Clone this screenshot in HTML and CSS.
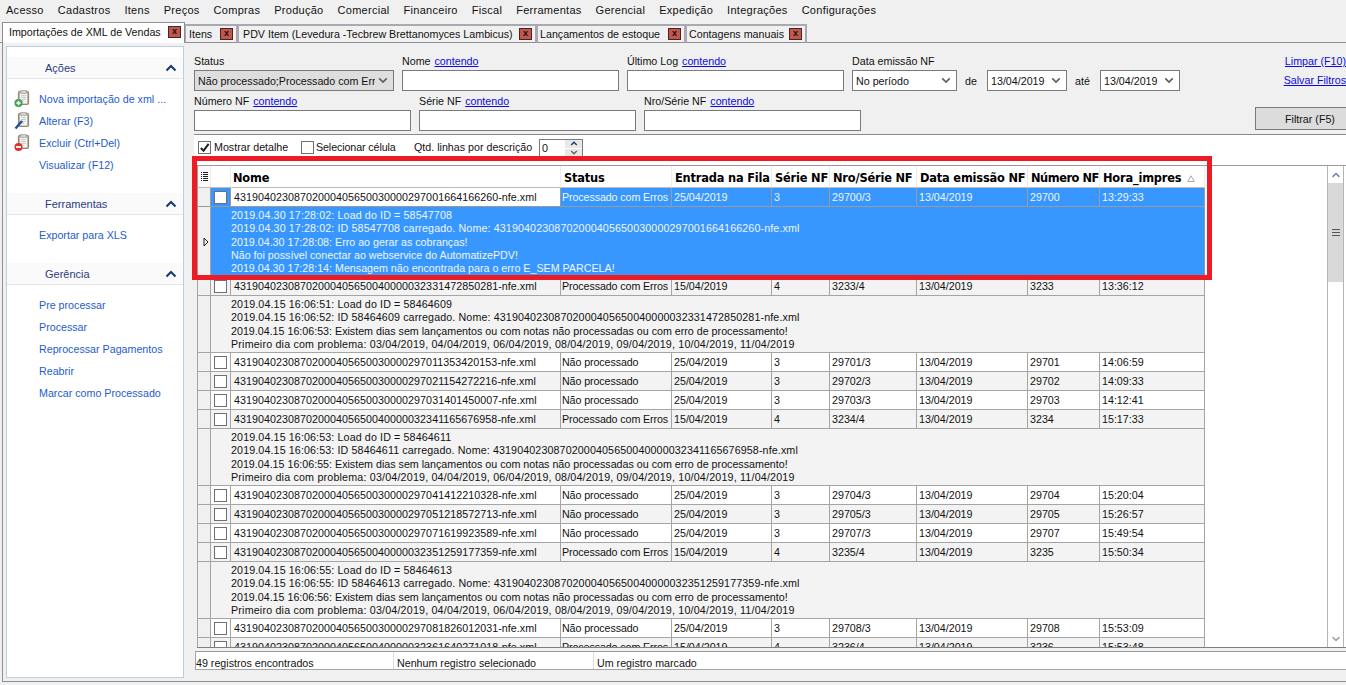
FILE: index.html
```html
<!DOCTYPE html>
<html lang="pt-BR">
<head>
<meta charset="utf-8">
<title>Importações de XML de Vendas</title>
<link rel="stylesheet" href="styles.css">
</head>
<body>
<svg class="defs" width="0" height="0" aria-hidden="true">
  <symbol id="board" viewBox="0 0 14 16">
    <rect x="1.5" y="1.5" width="11" height="14" rx="1" fill="#b3a28c" stroke="#8c7d6b"/>
    <rect x="3" y="3" width="8" height="11.5" fill="#f4f4f2"/>
    <rect x="4" y="0.5" width="6" height="3" fill="#d2d2d2" stroke="#9a9a9a" stroke-width=".7"/>
    <path d="M4.5 6h5M4.5 8h5M4.5 10h5M4.5 12h3" stroke="#b4bac0" stroke-width=".8"/>
  </symbol>
  <symbol id="chev" viewBox="0 0 12 8">
    <path d="M1.5 6.5 6 2l4.5 4.5" fill="none" stroke="#17366f" stroke-width="2"/>
  </symbol>
  <symbol id="down" viewBox="0 0 12 8">
    <path d="M1.5 1.5 6 6l4.5-4.5" fill="none" stroke="#5f5f5f" stroke-width="2"/>
  </symbol>
</svg>

<nav class="menubar">
  <span>Acesso</span><span>Cadastros</span><span>Itens</span><span>Preços</span><span>Compras</span><span>Produção</span><span>Comercial</span><span>Financeiro</span><span>Fiscal</span><span>Ferramentas</span><span>Gerencial</span><span>Expedição</span><span>Integrações</span><span>Configurações</span>
</nav>

<div class="tabs">
  <div class="tab active w-import"><span class="tab-label">Importações de XML de Vendas</span><b class="close">x</b></div>
  <div class="tab w-itens"><span class="tab-label">Itens</span><b class="close">x</b></div>
  <div class="tab w-pdv"><span class="tab-label">PDV Item (Levedura -Tecbrew Brettanomyces Lambicus)</span><b class="close">x</b></div>
  <div class="tab w-lanc"><span class="tab-label">Lançamentos de estoque</span><b class="close">x</b></div>
  <div class="tab w-cont"><span class="tab-label">Contagens manuais</span><b class="close">x</b></div>
</div>

<div class="page">
  <aside class="side">
    <div class="sec-head"><span>Ações</span><svg class="chev"><use href="#chev"/></svg></div>
    <ul class="sec-list first">
      <li><svg class="ico" viewBox="0 0 16 18"><use href="#board" x="3" y="0" width="13" height="15"/><circle cx="4.5" cy="13" r="4" fill="#3f9e54"/><path d="M2.3 13h4.4M4.5 10.8v4.4" stroke="#fff" stroke-width="1.5"/></svg>Nova importação de xml ...</li>
      <li><svg class="ico" viewBox="0 0 16 18"><use href="#board" x="3" y="0" width="13" height="15"/><path d="M1.5 16.5 8 9" stroke="#1d4f9c" stroke-width="2.4"/></svg>Alterar (F3)</li>
      <li><svg class="ico" viewBox="0 0 16 18"><use href="#board" x="3" y="0" width="13" height="15"/><circle cx="4.5" cy="13" r="4" fill="#d6332b"/><path d="M2 13h5" stroke="#fff" stroke-width="1.8"/></svg>Excluir (Ctrl+Del)</li>
      <li><span class="ico"></span>Visualizar (F12)</li>
    </ul>
    <div class="sec-head"><span>Ferramentas</span><svg class="chev"><use href="#chev"/></svg></div>
    <ul class="sec-list">
      <li><span class="ico"></span>Exportar para XLS</li>
    </ul>
    <div class="sec-head"><span>Gerência</span><svg class="chev"><use href="#chev"/></svg></div>
    <ul class="sec-list">
      <li><span class="ico"></span>Pre processar</li>
      <li><span class="ico"></span>Processar</li>
      <li><span class="ico"></span>Reprocessar Pagamentos</li>
      <li><span class="ico"></span>Reabrir</li>
      <li><span class="ico"></span>Marcar como Processado</li>
    </ul>
  </aside>

  <main class="main">
    <section class="filters">
      <div class="frow">
        <div class="field w-status"><label>Status</label><div class="ctl select grey"><span class="clip">Não processado;Processado com Erros</span><svg class="dd"><use href="#down"/></svg></div></div>
        <div class="field w-text"><label>Nome <a>contendo</a></label><div class="ctl"></div></div>
        <div class="field w-text"><label>Último Log <a>contendo</a></label><div class="ctl"></div></div>
        <div class="field w-period"><label>Data emissão NF</label><div class="ctl select"><span class="clip">No período</span><svg class="dd"><use href="#down"/></svg></div></div>
        <span class="sep sep-de">de</span>
        <div class="ctl select date"><span class="clip">13/04/2019</span><svg class="dd"><use href="#down"/></svg></div>
        <span class="sep sep-ate">até</span>
        <div class="ctl select date"><span class="clip">13/04/2019</span><svg class="dd"><use href="#down"/></svg></div>
        <div class="flinks"><a>Limpar (F10)</a><a>Salvar Filtros</a></div>
      </div>
      <div class="frow second">
        <div class="field w-text"><label>Número NF <a>contendo</a></label><div class="ctl"></div></div>
        <div class="field w-text"><label>Série NF <a>contendo</a></label><div class="ctl"></div></div>
        <div class="field w-text"><label>Nro/Série NF <a>contendo</a></label><div class="ctl"></div></div>
        <button class="filter-btn">Filtrar (F5)</button>
      </div>
    </section>

    <section class="options">
      <span class="box checked"><svg viewBox="0 0 12 12"><path d="M2 6.5 5 9.5 10.5 2" fill="none" stroke="#222" stroke-width="2.2"/></svg></span><span class="opt-a">Mostrar detalhe</span>
      <span class="box"></span><span class="opt-b">Selecionar célula</span>
      <span class="opt-c">Qtd. linhas por descrição</span>
      <div class="spin"><span>0</span><div class="spin-btns"><i><svg><use href="#chev"/></svg></i><i><svg><use href="#down"/></svg></i></div></div>
    </section>

    <section class="grid">
      <div class="grid-view">
        <table>
          <colgroup><col class="c0"><col class="c1"><col class="c2"><col class="c3"><col class="c4"><col class="c5"><col class="c6"><col class="c7"><col class="c8"><col class="c9"></colgroup>
          <thead>
            <tr>
              <th class="rh"><svg class="listico" viewBox="0 0 7 9"><path d="M0 .5h1M0 2.5h1M0 4.5h1M0 6.5h1M0 8.5h1M2 .5h5M2 2.5h5M2 4.5h5M2 6.5h5M2 8.5h5" stroke="#222" stroke-width="1"/></svg></th>
              <th></th><th>Nome</th><th>Status</th><th>Entrada na Fila</th><th>Série NF</th><th>Nro/Série NF</th><th>Data emissão NF</th><th class="tight">Número NF</th>
              <th>Hora_impres<svg class="sort" viewBox="0 0 8 7"><path d="M4 .8 7.3 6.5H.7Z" fill="none" stroke="#aaa"/></svg></th>
            </tr>
          </thead>
          <tbody>
            <tr class="sel">
              <td class="rh"></td><td class="ck"><span class="box"></span></td><td class="focus">43190402308702000405650030000297001664166260-nfe.xml</td><td>Processado com Erros</td><td>25/04/2019</td><td>3</td><td>29700/3</td><td>13/04/2019</td><td>29700</td><td>13:29:33</td>
            </tr>
            <tr class="sel det d5">
              <td class="rh"><svg class="cur" viewBox="0 0 6 10"><path d="M1 1 5 5 1 9Z" fill="none" stroke="#222"/></svg></td>
              <td colspan="9"><p>2019.04.30 17:28:02: Load do ID = 58547708</p><p>2019.04.30 17:28:02: ID 58547708 carregado. Nome: 43190402308702000405650030000297001664166260-nfe.xml</p><p class="plain">2019.04.30 17:28:08: Erro ao gerar as cobranças!</p><p class="plain">Não foi possível conectar ao webservice do AutomatizePDV!</p><p class="plain">2019.04.30 17:28:14: Mensagem não encontrada para o erro E_SEM PARCELA!</p></td>
            </tr>
            <tr class="alt">
              <td class="rh"></td><td class="ck"><span class="box"></span></td><td>43190402308702000405650040000032331472850281-nfe.xml</td><td>Processado com Erros</td><td>15/04/2019</td><td>4</td><td>3233/4</td><td>13/04/2019</td><td>3233</td><td>13:36:12</td>
            </tr>
            <tr class="alt det d4">
              <td class="rh"></td>
              <td colspan="9"><p>2019.04.15 16:06:51: Load do ID = 58464609</p><p>2019.04.15 16:06:52: ID 58464609 carregado. Nome: 43190402308702000405650040000032331472850281-nfe.xml</p><p class="plain">2019.04.15 16:06:53: Existem dias sem lançamentos ou com notas não processadas ou com erro de processamento!</p><p class="dates">Primeiro dia com problema: 03/04/2019, 04/04/2019, 06/04/2019, 08/04/2019, 09/04/2019, 10/04/2019, 11/04/2019</p></td>
            </tr>
            <tr>
              <td class="rh"></td><td class="ck"><span class="box"></span></td><td>43190402308702000405650030000297011353420153-nfe.xml</td><td>Não processado</td><td>25/04/2019</td><td>3</td><td>29701/3</td><td>13/04/2019</td><td>29701</td><td>14:06:59</td>
            </tr>
            <tr class="alt">
              <td class="rh"></td><td class="ck"><span class="box"></span></td><td>43190402308702000405650030000297021154272216-nfe.xml</td><td>Não processado</td><td>25/04/2019</td><td>3</td><td>29702/3</td><td>13/04/2019</td><td>29702</td><td>14:09:33</td>
            </tr>
            <tr>
              <td class="rh"></td><td class="ck"><span class="box"></span></td><td>43190402308702000405650030000297031401450007-nfe.xml</td><td>Não processado</td><td>25/04/2019</td><td>3</td><td>29703/3</td><td>13/04/2019</td><td>29703</td><td>14:12:41</td>
            </tr>
            <tr class="alt">
              <td class="rh"></td><td class="ck"><span class="box"></span></td><td>43190402308702000405650040000032341165676958-nfe.xml</td><td>Processado com Erros</td><td>15/04/2019</td><td>4</td><td>3234/4</td><td>13/04/2019</td><td>3234</td><td>15:17:33</td>
            </tr>
            <tr class="alt det d4">
              <td class="rh"></td>
              <td colspan="9"><p>2019.04.15 16:06:53: Load do ID = 58464611</p><p>2019.04.15 16:06:53: ID 58464611 carregado. Nome: 43190402308702000405650040000032341165676958-nfe.xml</p><p class="plain">2019.04.15 16:06:55: Existem dias sem lançamentos ou com notas não processadas ou com erro de processamento!</p><p class="dates">Primeiro dia com problema: 03/04/2019, 04/04/2019, 06/04/2019, 08/04/2019, 09/04/2019, 10/04/2019, 11/04/2019</p></td>
            </tr>
            <tr>
              <td class="rh"></td><td class="ck"><span class="box"></span></td><td>43190402308702000405650030000297041412210328-nfe.xml</td><td>Não processado</td><td>25/04/2019</td><td>3</td><td>29704/3</td><td>13/04/2019</td><td>29704</td><td>15:20:04</td>
            </tr>
            <tr class="alt">
              <td class="rh"></td><td class="ck"><span class="box"></span></td><td>43190402308702000405650030000297051218572713-nfe.xml</td><td>Não processado</td><td>25/04/2019</td><td>3</td><td>29705/3</td><td>13/04/2019</td><td>29705</td><td>15:26:57</td>
            </tr>
            <tr>
              <td class="rh"></td><td class="ck"><span class="box"></span></td><td>43190402308702000405650030000297071619923589-nfe.xml</td><td>Não processado</td><td>25/04/2019</td><td>3</td><td>29707/3</td><td>13/04/2019</td><td>29707</td><td>15:49:54</td>
            </tr>
            <tr class="alt">
              <td class="rh"></td><td class="ck"><span class="box"></span></td><td>43190402308702000405650040000032351259177359-nfe.xml</td><td>Processado com Erros</td><td>15/04/2019</td><td>4</td><td>3235/4</td><td>13/04/2019</td><td>3235</td><td>15:50:34</td>
            </tr>
            <tr class="alt det d4">
              <td class="rh"></td>
              <td colspan="9"><p>2019.04.15 16:06:55: Load do ID = 58464613</p><p>2019.04.15 16:06:55: ID 58464613 carregado. Nome: 43190402308702000405650040000032351259177359-nfe.xml</p><p class="plain">2019.04.15 16:06:56: Existem dias sem lançamentos ou com notas não processadas ou com erro de processamento!</p><p class="dates">Primeiro dia com problema: 03/04/2019, 04/04/2019, 06/04/2019, 08/04/2019, 09/04/2019, 10/04/2019, 11/04/2019</p></td>
            </tr>
            <tr>
              <td class="rh"></td><td class="ck"><span class="box"></span></td><td>43190402308702000405650030000297081826012031-nfe.xml</td><td>Não processado</td><td>25/04/2019</td><td>3</td><td>29708/3</td><td>13/04/2019</td><td>29708</td><td>15:53:09</td>
            </tr>
            <tr class="alt">
              <td class="rh"></td><td class="ck"><span class="box"></span></td><td>43190402308702000405650040000032361640271018-nfe.xml</td><td>Processado com Erros</td><td>15/04/2019</td><td>4</td><td>3236/4</td><td>13/04/2019</td><td>3236</td><td>15:53:48</td>
            </tr>
          </tbody>
        </table>
      </div>
      <div class="vscroll">
        <div class="sb-btn"><svg><use href="#chev"/></svg></div>
        <div class="sb-thumb"><i></i></div>
        <div class="sb-track"></div>
        <div class="sb-btn"><svg><use href="#down"/></svg></div>
      </div>
    </section>

    <footer class="status">
      <span class="s1">49 registros encontrados</span>
      <span class="s2">Nenhum registro selecionado</span>
      <span class="s3">Um registro marcado</span>
    </footer>
  </main>
</div>

<div class="highlight"></div>
</body>
</html>
```

FILE: styles.css
```css
* { box-sizing: border-box; }
html, body { margin: 0; padding: 0; }
body {
  width: 1346px;
  height: 685px;
  overflow: hidden;
  position: relative;
  background: #f0f0f0;
  font-family: "Liberation Sans", Arial, sans-serif;
  font-size: 10.7px;
  color: #111;
}
.defs { position: absolute; }
a { color: #0a0ae0; text-decoration: underline; }

/* menu */
.menubar {
  height: 22px;
  display: flex;
  align-items: center;
  gap: 14px;
  padding: 0 0 3px 6px;
  font-size: 11px;
  letter-spacing: .28px;
}

/* tabs */
.tabs {
  height: 21px;
  display: flex;
  align-items: flex-end;
  padding-left: 2px;
  border-bottom: 1px solid #8f8f98;
}
.tab {
  height: 19px;
  margin-bottom: -1px;
  display: flex;
  align-items: center;
  justify-content: space-between;
  padding: 0 3px 0 3px;
  background: #f0f0f0;
  border: 2px solid #a9a9b2;
  border-bottom: 1px solid #8f8f98;
  border-left-width: 1px;
  font-size: 10.7px;
  white-space: nowrap;
}
.tab.active {
  height: 21px;
  background: #fff;
  border: 1px solid #8f8f98;
  border-bottom: 0;
  padding: 0 3px 2px 6px;
}
.w-import { width: 183px; }
.w-itens { width: 53px; }
.w-pdv { width: 299px; padding-left: 4px; }
.w-lanc { width: 149px; padding-left: 2px; }
.w-cont { width: 121px; padding-left: 2px; }
.close {
  width: 13px;
  height: 12px;
  flex: none;
  background: #c0564c;
  border: 1px solid #4a2320;
  color: #111;
  font: bold 9px/9px "Liberation Sans", Arial, sans-serif;
  letter-spacing: 0;
  text-align: center;
}

/* page */
.page {
  height: 639px;
  margin-left: 2px;
  display: flex;
  gap: 10px;
  padding: 3px 0 3px 3px;
  border-left: 1px solid #8f8f98;
  border-bottom: 1px solid #8f8f98;
}
.side {
  width: 178px;
  flex: none;
  background: #fff;
  border: 1px solid #bccfdd;
  padding-top: 10px;
}
.sec-head {
  height: 22px;
  display: flex;
  align-items: center;
  justify-content: space-between;
  padding: 0 6px 0 38px;
  background: #fafafa;
  border-bottom: 1px solid #e2e6e9;
  color: #2c3a86;
  font-size: 11px;
}
.chev { width: 12px; height: 8px; }
.sec-list { list-style: none; margin: 0; padding: 9px 0 17px 0; }
.sec-list li {
  height: 22px;
  display: flex;
  align-items: center;
  color: #1e5ccf;
  white-space: nowrap;
  padding-left: 7px;
}
.ico { width: 16px; height: 18px; margin-right: 9px; flex: none; }

/* main */
.main {
  flex: 1;
  min-width: 0;
  display: flex;
  flex-direction: column;
}
.filters {
  height: 89px;
  padding-top: 8px;
  border-bottom: 1px solid #8a8a8a;
  overflow: hidden;
}
.frow { display: flex; align-items: flex-end; gap: 8px; height: 37px; }
.frow.second { margin-top: 3px; }
.field { display: flex; flex-direction: column; }
.field label { height: 16px; line-height: 14px; white-space: nowrap; }
.field label a { margin-left: 1px; }
.w-status { width: 200px; }
.w-text { width: 217px; }
.w-period { width: 105px; }
.ctl {
  height: 21px;
  background: #fff;
  border: 1px solid #7a7a7a;
}
.select {
  display: flex;
  align-items: center;
  justify-content: space-between;
  padding: 0 3px;
  gap: 3px;
}
.select.grey { background: #dedede; }
.clip { overflow: hidden; white-space: nowrap; flex: 1; }
.dd { width: 10px; height: 7px; flex: none; margin-right: 2px; }
.date { width: 80px; }
.sep { height: 20px; line-height: 20px; }
.sep-de { width: 14px; }
.sep-ate { width: 17px; }
.flinks {
  margin-left: auto;
  height: 37px;
  display: flex;
  flex-direction: column;
  align-items: flex-end;
  gap: 5px;
  width: 70px;
  white-space: nowrap;
}
.flinks a { height: 14px; line-height: 14px; }
.filter-btn {
  margin-left: auto;
  margin-right: -19px;
  width: 110px;
  height: 23px;
  margin-bottom: 1px;
  background: #dcdcdc;
  border: 1px solid #7a7a7a;
  font: inherit;
  color: #111;
  padding: 0;
}

.options {
  height: 30px;
  background: #fff;
  display: flex;
  align-items: center;
  padding: 0 0 6px 4px;
  white-space: nowrap;
}
.box {
  display: inline-block;
  width: 13px;
  height: 13px;
  background: #fff;
  border: 1px solid #6f6f6f;
  flex: none;
}
.box svg { display: block; width: 11px; height: 11px; }
.opt-a { margin-left: 3px; width: 87px; }
.opt-b { margin-left: 2px; width: 98px; letter-spacing: -.1px; }
.opt-c { width: 125px; }
.spin {
  width: 44px;
  height: 19px;
  margin-top: 3px;
  border: 1px solid #7a7a7a;
  display: flex;
  justify-content: space-between;
  padding-left: 2px;
  line-height: 17px;
}
.spin-btns { width: 17px; display: flex; flex-direction: column; }
.spin-btns i {
  flex: 1;
  display: flex;
  align-items: center;
  justify-content: center;
  background: #e8e8e8;
  border-bottom: 1px solid #fff;
}
.spin-btns svg { width: 8px; height: 5px; }

/* grid */
.grid {
  height: 483px;
  margin-left: 3px;
  display: flex;
  background: #fff;
  border-top: 1px solid #9a9a9a;
  border-bottom: 1px solid #7f7f7f;
}
.grid-view { width: 1130px; overflow: hidden; flex: none; }
table {
  width: 1008px;
  table-layout: fixed;
  border-collapse: separate;
  border-spacing: 0;
}
.c0 { width: 14px; } .c1 { width: 20px; } .c2 { width: 330px; } .c3 { width: 111px; }
.c4 { width: 100px; } .c5 { width: 58px; } .c6 { width: 87px; } .c7 { width: 111px; }
.c8 { width: 72px; } .c9 { width: 105px; }
th {
  height: 22px;
  padding: 2px 2px 0 3px;
  background: #fff;
  border-right: 1px solid #ececec;
  border-bottom: 1px solid #bbb;
  text-align: left;
  font-family: "DejaVu Sans", sans-serif;
  font-size: 11.4px;
  font-weight: bold;
  color: #000;
  white-space: nowrap;
  overflow: hidden;
  letter-spacing: -.18px;
}
th:nth-child(3) { padding-left: 2px; }
th.tight { letter-spacing: -.45px; }
th.rh { padding: 0 0 0 3px; border-left: 1px solid #9a9a9a; background: #fafafa; }
.listico { display: block; width: 7px; height: 9px; }
.sort { width: 8px; height: 7px; margin-left: 6px; }
td {
  height: 19px;
  padding: 0 2px;
  background: #fff;
  border-right: 1px solid #a5a5a5;
  border-bottom: 1px solid #a5a5a5;
  white-space: nowrap;
  overflow: hidden;
}
td:nth-child(3) { padding-left: 3px; letter-spacing: .06px; }
td:nth-child(4) { padding-left: 1px; letter-spacing: -.1px; }
.alt td { background: #f3f3f3; }
td.rh {
  background: #f0f0f0;
  border-left: 1px solid #a5a5a5;
  padding: 0;
}
.ck { padding: 0 0 0 3px; }
.ck .box { display: block; }
.sel td { background: #3897ff; color: #eef6ff; border-color: #9a9a9a; }
.sel td.rh { background: #f0f0f0; }
.sel td.focus { background: #fff; color: #111; }
.det td { border-right-color: #a5a5a5; vertical-align: top; padding: 2px 0 0 20px; }
.det td.rh { padding: 0; vertical-align: middle; }
.sel.det td { border-bottom-color: #3897ff; border-right-style: dotted; border-right-color: #c9a063; }
.sel.det td.rh { border-right-color: #a5a5a5; border-bottom-color: #a5a5a5; border-right-style: solid; }
.det p { margin: 0; line-height: 13.25px; letter-spacing: .12px; }
.det p.plain { letter-spacing: 0; }
.det p.dates { letter-spacing: .19px; }
.d5 td { height: 70px; }
.d4 td { height: 57px; }
.cur { display: block; width: 6px; height: 10px; margin-left: 5px; }

.vscroll {
  width: 17px;
  flex: none;
  display: flex;
  flex-direction: column;
  border-left: 1px solid #b5b5b5;
  border-right: 1px solid #b5b5b5;
  background: #fff;
}
.sb-btn {
  height: 17px;
  display: flex;
  align-items: center;
  justify-content: center;
  background: #fff;
}
.sb-btn svg { width: 10px; height: 6px; opacity: .6; }
.sb-thumb {
  height: 99px;
  background: #d9d9d9;
  display: flex;
  align-items: center;
  justify-content: center;
}
.sb-thumb i {
  display: block;
  width: 8px;
  height: 7px;
  background: repeating-linear-gradient(#555 0 1px, transparent 1px 3px);
}
.sb-track { flex: 1; }

.status {
  height: 19px;
  margin: 3px 0 0 1px;
  display: flex;
  align-items: center;
  background: #fff;
  border-top: 1px solid #9a9a9a;
  border-bottom: 1px solid #a5a5a5;
  border-left: 1px solid #a5a5a5;
  white-space: nowrap;
}
.status span { height: 100%; line-height: 22px; overflow: hidden; }
.s1 { width: 197px; }
.s2 { width: 200px; border-left: 1px solid #ddd; padding-left: 3px; }
.s3 { flex: 1; border-left: 1px solid #ddd; padding-left: 3px; }

/* red annotation over the screenshot */
.highlight {
  position: absolute;
  left: 192px;
  top: 156px;
  width: 1020px;
  height: 124px;
  border: 5px solid #ed1c24;
  pointer-events: none;
}
```
